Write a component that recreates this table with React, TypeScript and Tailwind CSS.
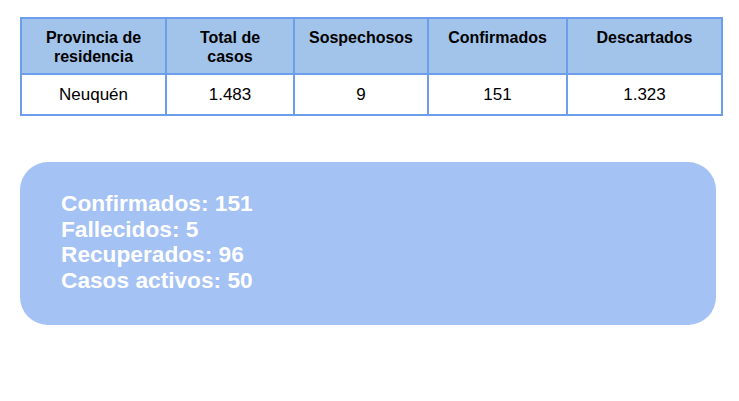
const headers = [
  "Provincia de residencia",
  "Total de casos",
  "Sospechosos",
  "Confirmados",
  "Descartados",
];

const values = ["Neuquén", "1.483", "9", "151", "1.323"];

const summary = [
  "Confirmados: 151",
  "Fallecidos: 5",
  "Recuperados: 96",
  "Casos activos: 50",
];

export default function App() {
  return (
    <div className="w-[739px] h-[401px] bg-white font-['Liberation_Sans',Arial,sans-serif] text-black">
      <div className="pt-[17px] pl-[20px]">
        <div className="grid w-fit grid-cols-[145px_128px_134px_139px_155px] border-l-2 border-t-2 border-[#6d9eeb]">
          {headers.map((h) => (
            <div
              key={h}
              className="h-[56px] border-r-2 border-b-2 border-[#6d9eeb] bg-[#a2c4ea] px-3 pt-[9px] text-center text-[16px] font-bold leading-[19px]"
            >
              {h}
            </div>
          ))}
          {values.map((v, i) => (
            <div
              key={i}
              className="flex h-[41px] items-center justify-center border-r-2 border-b-2 border-[#6d9eeb] text-[17px]"
            >
              {v}
            </div>
          ))}
        </div>
      </div>

      <div className="mx-[20px] mt-[46px] h-[163px] w-[696px] rounded-[28px] bg-[#a4c2f4] pl-[41px] pt-[29px]">
        {summary.map((s) => (
          <p key={s} className="text-[22.7px] font-bold leading-[25.5px] text-white">
            {s}
          </p>
        ))}
      </div>
    </div>
  );
}
